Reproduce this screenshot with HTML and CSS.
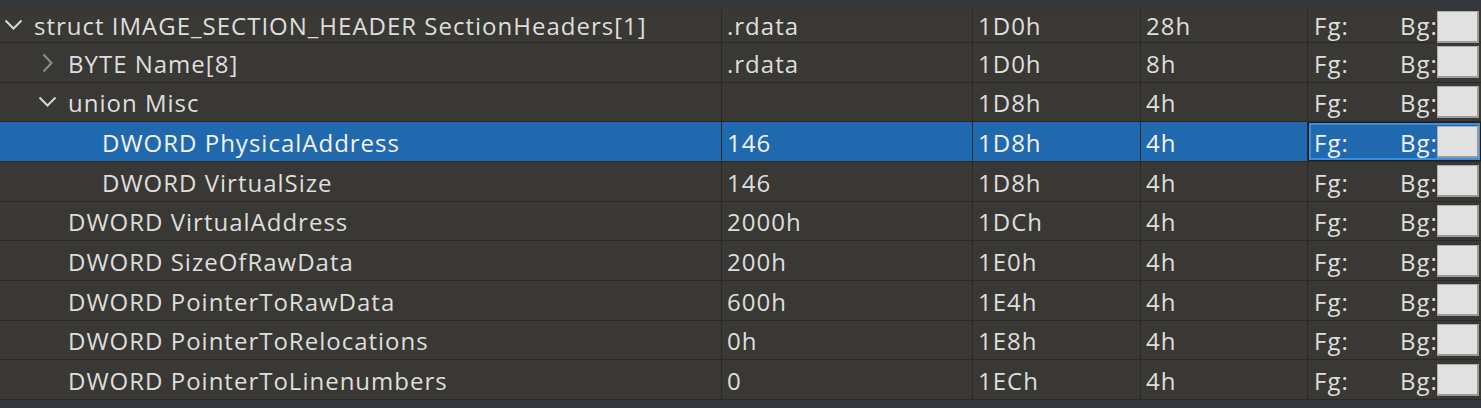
FILE: index.html
```html
<!DOCTYPE html>
<html>
<head>
<meta charset="utf-8">
<link rel="stylesheet" href="styles.css">
</head>
<body>
<div class="view">
  <div class="topbar"></div>
  <div class="table">
    <div class="row first">
      <div class="cell name lvl0"><span class="chev open"><svg viewBox="0 0 20 20"><path d="M1.5 5.5 L9.5 13.5 L17.5 5.5"/></svg></span><span>struct IMAGE_SECTION_HEADER SectionHeaders[1]</span></div>
      <div class="cell">.rdata</div><div class="cell">1D0h</div><div class="cell">28h</div>
      <div class="cell color"><span class="fg">Fg:</span><span class="bg">Bg:</span><span class="swatch"></span></div>
    </div>
    <div class="row">
      <div class="cell name lvl1"><span class="chev closed"><svg viewBox="0 0 20 20"><path d="M5.5 1.5 L13.5 10 L5.5 18.5"/></svg></span><span>BYTE Name[8]</span></div>
      <div class="cell">.rdata</div><div class="cell">1D0h</div><div class="cell">8h</div>
      <div class="cell color"><span class="fg">Fg:</span><span class="bg">Bg:</span><span class="swatch"></span></div>
    </div>
    <div class="row">
      <div class="cell name lvl1"><span class="chev open"><svg viewBox="0 0 20 20"><path d="M1.5 5.5 L9.5 13.5 L17.5 5.5"/></svg></span><span>union Misc</span></div>
      <div class="cell"></div><div class="cell">1D8h</div><div class="cell">4h</div>
      <div class="cell color"><span class="fg">Fg:</span><span class="bg">Bg:</span><span class="swatch"></span></div>
    </div>
    <div class="row selected">
      <div class="cell name lvl2"><span class="chev"></span><span>DWORD PhysicalAddress</span></div>
      <div class="cell">146</div><div class="cell">1D8h</div><div class="cell">4h</div>
      <div class="cell color focus"><span class="fg">Fg:</span><span class="bg">Bg:</span><span class="swatch"></span></div>
    </div>
    <div class="row">
      <div class="cell name lvl2"><span class="chev"></span><span>DWORD VirtualSize</span></div>
      <div class="cell">146</div><div class="cell">1D8h</div><div class="cell">4h</div>
      <div class="cell color"><span class="fg">Fg:</span><span class="bg">Bg:</span><span class="swatch"></span></div>
    </div>
    <div class="row">
      <div class="cell name lvl1"><span class="chev"></span><span>DWORD VirtualAddress</span></div>
      <div class="cell">2000h</div><div class="cell">1DCh</div><div class="cell">4h</div>
      <div class="cell color"><span class="fg">Fg:</span><span class="bg">Bg:</span><span class="swatch"></span></div>
    </div>
    <div class="row">
      <div class="cell name lvl1"><span class="chev"></span><span>DWORD SizeOfRawData</span></div>
      <div class="cell">200h</div><div class="cell">1E0h</div><div class="cell">4h</div>
      <div class="cell color"><span class="fg">Fg:</span><span class="bg">Bg:</span><span class="swatch"></span></div>
    </div>
    <div class="row">
      <div class="cell name lvl1"><span class="chev"></span><span>DWORD PointerToRawData</span></div>
      <div class="cell">600h</div><div class="cell">1E4h</div><div class="cell">4h</div>
      <div class="cell color"><span class="fg">Fg:</span><span class="bg">Bg:</span><span class="swatch"></span></div>
    </div>
    <div class="row">
      <div class="cell name lvl1"><span class="chev"></span><span>DWORD PointerToRelocations</span></div>
      <div class="cell">0h</div><div class="cell">1E8h</div><div class="cell">4h</div>
      <div class="cell color"><span class="fg">Fg:</span><span class="bg">Bg:</span><span class="swatch"></span></div>
    </div>
    <div class="row">
      <div class="cell name lvl1"><span class="chev"></span><span>DWORD PointerToLinenumbers</span></div>
      <div class="cell">0</div><div class="cell">1ECh</div><div class="cell">4h</div>
      <div class="cell color"><span class="fg">Fg:</span><span class="bg">Bg:</span><span class="swatch"></span></div>
    </div>
  </div>
</div>
</body>
</html>
```
FILE: styles.css
```css
html, body {
  margin: 0;
  padding: 0;
  background: #33373b;
}
.view {
  width: 1481px;
  height: 408px;
  overflow: hidden;
  background: #33373b;
  display: flex;
  flex-direction: column;
  font-family: "Open Sans", "Noto Sans", sans-serif;
  font-size: 24px;
  letter-spacing: 1px;
  color: #dedede;
}
.topbar {
  height: 9px;
  flex: none;
  background: #33373b;
}
.table {
  display: flex;
  flex-direction: column;
  background: #3a3834;
}
.row {
  display: grid;
  grid-template-columns: 722px 251px 168px 167px 173px;
  height: 39.67px;
  box-sizing: border-box;
  border-bottom: 1px solid #2a2926;
  background: #3a3834;
}
.row.first {
  height: 34px;
}
.row.first .cell {
  padding-top: 0;
  padding-bottom: 2px;
}
.cell {
  box-sizing: border-box;
  border-right: 1px solid #2a2926;
  display: flex;
  align-items: center;
  padding-left: 5px;
  padding-top: 3px;
  white-space: nowrap;
  line-height: 28px;
}
.cell:last-child {
  border-right: none;
}
.row.selected {
  background: #2169ae;
  color: #f2f2f2;
}
.lvl0 { padding-left: 0; }
.lvl1 { padding-left: 34px; }
.lvl2 { padding-left: 68px; }
.chev {
  width: 34px;
  height: 20px;
  flex: none;
  display: flex;
  align-items: center;
  justify-content: flex-start;
  padding-left: 4px;
  box-sizing: border-box;
  margin-top: -2px;
}
.chev svg {
  width: 20px;
  height: 20px;
  fill: none;
  stroke-width: 2;
}
.chev.open svg { stroke: #d6d6d6; }
.chev.closed svg { stroke: #8c8c8c; }
.color {
  padding-left: 6px;
}
.fg { width: 86px; }
.bg { width: 37px; }
.swatch {
  width: 42px;
  height: 32px;
  box-sizing: border-box;
  background: #e1e1e1;
  border: 1px solid #adadad;
  border-right-width: 2px;
  border-bottom-width: 2px;
  border-right-color: #9a9a9a;
  border-bottom-color: #9a9a9a;
  flex: none;
  margin-top: -3px;
}
.row.first .swatch {
  margin-top: 2px;
}
.color.focus {
  box-shadow: inset 0 0 0 1px #1d1f22, inset 0 0 0 3px #3b8fe3;
}
```
